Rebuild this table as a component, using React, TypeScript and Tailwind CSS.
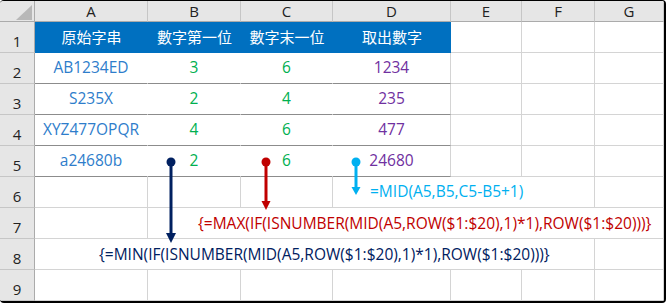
import React from 'react';

const latin = "font-['Open_Sans','Noto_Sans_CJK_TC',sans-serif]";
const cjk = "font-['Noto_Sans_CJK_TC',sans-serif]";

const lite = 'border-r border-b border-r-[#d4d4d4] border-b-[#d4d4d4]';

const Cell = ({ className = '', children }: { className?: string; children?: React.ReactNode }) => (
  <div className={`flex items-center justify-center whitespace-nowrap ${className}`}>{children}</div>
);

const RowNum = ({ n }: { n: number }) => (
  <div className={`flex items-end justify-center bg-[#e6e6e6] border-r border-b border-r-[#ababab] border-b-[#c6c6c6] pb-[1px] text-[15px] leading-[20px] text-[#222] ${latin}`}>
    {n}
  </div>
);

const Sheet = () => {
  const letters = ['A', 'B', 'C', 'D', 'E', 'F', 'G'];
  const titles = ['原始字串', '數字第一位', '數字末一位', '取出數字'];
  const table = [
    ['AB1234ED', '3', '6', '1234'],
    ['S235X', '2', '4', '235'],
    ['XYZ477OPQR', '4', '6', '477'],
    ['a24680b', '2', '6', '24680'],
  ];
  const colors = ['text-[#2e7dcb]', 'text-[#00b050]', 'text-[#00b050]', 'text-[#7030a0]'];

  return (
    <div className="relative w-[666px] h-[303px] bg-white">
      <div className={`grid grid-cols-[35px_113px_93px_92px_118px_71px_73px_69px] grid-rows-[21px_repeat(9,31px)] w-[666px] h-[303px] border-t border-r-2 border-b-2 border-black rounded-[4px] overflow-hidden ${latin}`}>
        {/* column headers */}
        <div className="relative bg-[#e6e6e6] border-r border-b border-[#ababab]">
          <svg className="absolute left-[16px] top-[4px]" width="16" height="15" viewBox="0 0 16 15">
            <polygon points="16,0 16,15 0,15" fill="#b8b8b8" />
          </svg>
        </div>
        {letters.map((l) => (
          <Cell key={l} className="bg-[#e6e6e6] border-r border-b border-r-[#c6c6c6] border-b-[#ababab] text-[15px] text-[#222]">
            {l}
          </Cell>
        ))}

        {/* row 1 */}
        <RowNum n={1} />
        {titles.map((t) => (
          <Cell key={t} lang="zh-Hant" className={`bg-[#0070c0] text-white text-[15px] ${cjk}`}>
            {t}
          </Cell>
        ))}
        <Cell className={lite} />
        <Cell className={lite} />
        <Cell className={lite} />

        {/* rows 2-5 */}
        {table.map((row, r) => (
          <React.Fragment key={r}>
            <RowNum n={r + 2} />
            {row.map((v, c) => (
              <Cell
                key={c}
                className={`border-r border-b border-b-[#8c8c8c] text-[15.5px] ${c === 3 ? 'border-r-[#d4d4d4]' : 'border-r-white'} ${colors[c]}`}
              >
                {v}
              </Cell>
            ))}
            <Cell className={lite} />
            <Cell className={lite} />
            <Cell className={lite} />
          </React.Fragment>
        ))}

        {/* row 6 */}
        <RowNum n={6} />
        <Cell className={lite} />
        <Cell className={lite} />
        <Cell className={lite} />
        <Cell className={`col-span-3 justify-start pl-[37px] text-[15.5px] text-[#00b0f0] ${lite}`}>=MID(A5,B5,C5-B5+1)</Cell>
        <Cell className={lite} />

        {/* row 7 */}
        <RowNum n={7} />
        <Cell className={lite} />
        <Cell className={`col-span-6 justify-start pl-[50px] pt-[2px] text-[15.5px] text-[#c00000] ${lite}`}>
          {'{=MAX(IF(ISNUMBER(MID(A5,ROW($1:$20),1)*1),ROW($1:$20)))}'}
        </Cell>

        {/* row 8 */}
        <RowNum n={8} />
        <Cell className={`col-span-6 justify-start pl-[64px] pt-[2px] text-[15.5px] text-[#002060] ${lite}`}>
          {'{=MIN(IF(ISNUMBER(MID(A5,ROW($1:$20),1)*1),ROW($1:$20)))}'}
        </Cell>
        <Cell className={lite} />

        {/* row 9 */}
        <RowNum n={9} />
        {letters.map((l) => (
          <Cell key={l} className={lite} />
        ))}
      </div>

      {/* arrows */}
      <svg className="absolute left-0 top-0 pointer-events-none" width="666" height="303" viewBox="0 0 666 303">
        <circle cx="171" cy="162" r="4.5" fill="#002060" />
        <line x1="171" y1="162" x2="171" y2="234" stroke="#002060" strokeWidth="3" />
        <polygon points="166,233 176,233 171,243" fill="#002060" />

        <circle cx="266" cy="162" r="4.5" fill="#c00000" />
        <line x1="266" y1="162" x2="266" y2="202" stroke="#c00000" strokeWidth="3" />
        <polygon points="261.5,201 270.5,201 266,210" fill="#c00000" />

        <circle cx="356" cy="162" r="4.5" fill="#00b0f0" />
        <line x1="356" y1="162" x2="356" y2="188" stroke="#00b0f0" strokeWidth="3" />
        <polygon points="351.5,187 360.5,187 356,195" fill="#00b0f0" />
      </svg>
    </div>
  );
};

export default function App() {
  return <Sheet />;
}
